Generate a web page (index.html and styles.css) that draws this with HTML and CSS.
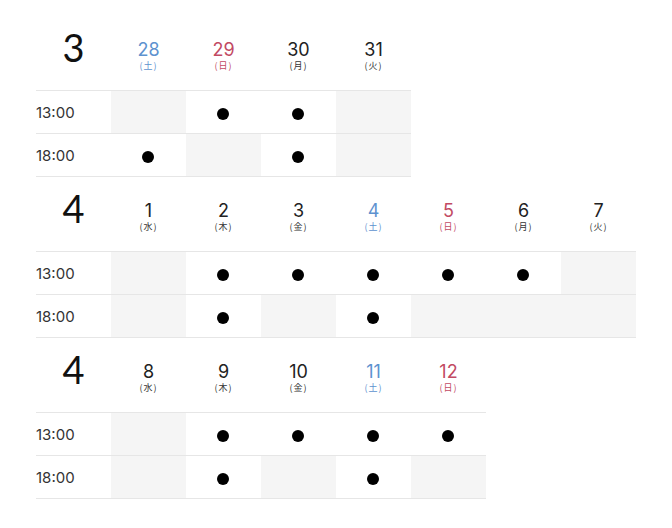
FILE: index.html
```html
<!DOCTYPE html>
<html lang="ja">
<head>
<meta charset="utf-8">
<link rel="stylesheet" href="styles.css">
</head>
<body>
<div class="schedule">
  <table class="month">
    <tr class="head">
      <th class="mnum">3</th>
      <th class="day sat"><span class="d">28</span><span class="w">(土)</span></th>
      <th class="day sun"><span class="d">29</span><span class="w">(日)</span></th>
      <th class="day"><span class="d">30</span><span class="w">(月)</span></th>
      <th class="day"><span class="d">31</span><span class="w">(火)</span></th>
    </tr>
    <tr>
      <td class="time">13:00</td>
      <td class="off"></td>
      <td><span class="dot"></span></td>
      <td><span class="dot"></span></td>
      <td class="off"></td>
    </tr>
    <tr>
      <td class="time">18:00</td>
      <td><span class="dot"></span></td>
      <td class="off"></td>
      <td><span class="dot"></span></td>
      <td class="off"></td>
    </tr>
  </table>

  <table class="month">
    <tr class="head">
      <th class="mnum">4</th>
      <th class="day"><span class="d">1</span><span class="w">(水)</span></th>
      <th class="day"><span class="d">2</span><span class="w">(木)</span></th>
      <th class="day"><span class="d">3</span><span class="w">(金)</span></th>
      <th class="day sat"><span class="d">4</span><span class="w">(土)</span></th>
      <th class="day sun"><span class="d">5</span><span class="w">(日)</span></th>
      <th class="day"><span class="d">6</span><span class="w">(月)</span></th>
      <th class="day"><span class="d">7</span><span class="w">(火)</span></th>
    </tr>
    <tr>
      <td class="time">13:00</td>
      <td class="off"></td>
      <td><span class="dot"></span></td>
      <td><span class="dot"></span></td>
      <td><span class="dot"></span></td>
      <td><span class="dot"></span></td>
      <td><span class="dot"></span></td>
      <td class="off"></td>
    </tr>
    <tr>
      <td class="time">18:00</td>
      <td class="off"></td>
      <td><span class="dot"></span></td>
      <td class="off"></td>
      <td><span class="dot"></span></td>
      <td class="off"></td>
      <td class="off"></td>
      <td class="off"></td>
    </tr>
  </table>

  <table class="month">
    <tr class="head">
      <th class="mnum">4</th>
      <th class="day"><span class="d">8</span><span class="w">(水)</span></th>
      <th class="day"><span class="d">9</span><span class="w">(木)</span></th>
      <th class="day"><span class="d">10</span><span class="w">(金)</span></th>
      <th class="day sat"><span class="d">11</span><span class="w">(土)</span></th>
      <th class="day sun"><span class="d">12</span><span class="w">(日)</span></th>
    </tr>
    <tr>
      <td class="time">13:00</td>
      <td class="off"></td>
      <td><span class="dot"></span></td>
      <td><span class="dot"></span></td>
      <td><span class="dot"></span></td>
      <td><span class="dot"></span></td>
    </tr>
    <tr>
      <td class="time">18:00</td>
      <td class="off"></td>
      <td><span class="dot"></span></td>
      <td class="off"></td>
      <td><span class="dot"></span></td>
      <td class="off"></td>
    </tr>
  </table>
</div>
</body>
</html>
```

FILE: styles.css
```css
html, body {
  margin: 0;
  padding: 0;
  background: #fff;
}
body {
  font-family: "Inter", "Noto Sans", "Noto Sans CJK JP", sans-serif;
  color: #1a1a1a;
}
.schedule {
  padding: 16px 0 0 36px;
}
.month {
  border-collapse: separate;
  border-spacing: 0;
  table-layout: fixed;
}
.month th,
.month td {
  width: 75px;
  padding: 0;
  text-align: center;
  vertical-align: middle;
  border-bottom: 1px solid #e6e6e6;
  box-sizing: border-box;
}
.head th {
  height: 75px;
  font-weight: normal;
}
.mnum {
  font-family: "Lato", "Inter", sans-serif;
  font-size: 38px;
  font-weight: 300;
  line-height: 1;
  color: #111;
  padding-bottom: 13px !important;
}
.day {
  padding-top: 6px !important;
}
.day .d {
  display: block;
  font-size: 18px;
  line-height: 20px;
  font-weight: 400;
  color: #222;
}
.day .w {
  display: block;
  font-family: "Noto Sans CJK JP", sans-serif;
  font-size: 9px;
  line-height: 12px;
  letter-spacing: 1px;
  color: #333;
}
.day.sat .d,
.day.sat .w {
  color: #5d92cf;
}
.day.sun .d,
.day.sun .w {
  color: #c24a63;
}
.month td {
  height: 43px;
}
.time {
  text-align: left !important;
  font-size: 15px;
  color: #333;
}
.off {
  background: #f5f5f5;
}
.dot {
  display: inline-block;
  width: 12px;
  height: 12px;
  border-radius: 50%;
  background: #000;
  vertical-align: middle;
  margin-left: -2px;
}
```
